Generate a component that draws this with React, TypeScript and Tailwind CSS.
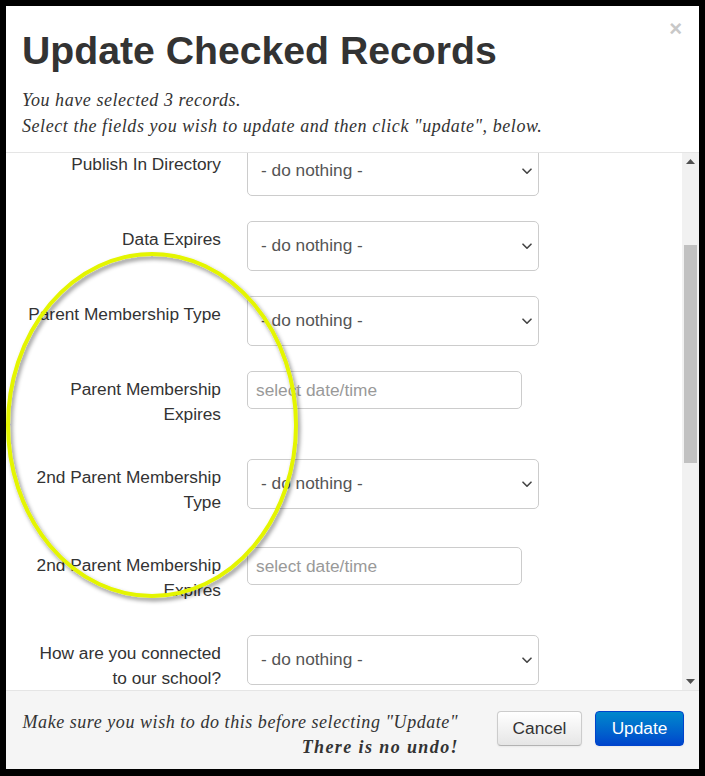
type Field = { label: string; kind: 'select' | 'date' }

const fields: Field[] = [
  { label: 'Publish In Directory', kind: 'select' },
  { label: 'Data Expires', kind: 'select' },
  { label: 'Parent Membership Type', kind: 'select' },
  { label: 'Parent Membership Expires', kind: 'date' },
  { label: '2nd Parent Membership Type', kind: 'select' },
  { label: '2nd Parent Membership Expires', kind: 'date' },
  { label: 'How are you connected to our school?', kind: 'select' },
]

function Chevron() {
  return (
    <svg width="10" height="7" viewBox="0 0 10 7" fill="none">
      <path d="M1 1.2 L5 5.2 L9 1.2" stroke="#444" strokeWidth="1.6" strokeLinecap="round" strokeLinejoin="round" />
    </svg>
  )
}

function FieldRow({ field }: { field: Field }) {
  return (
    <div className="flex items-start mb-[25px]">
      <label className="w-[198px] shrink-0 text-right pt-[6px] pb-[7px] leading-[25px] text-[17.3px] text-[#333]">
        {field.label}
      </label>
      <div className="ml-[26px]">
        {field.kind === 'select' ? (
          <div className="flex items-center justify-between w-[292px] h-[50px] pl-[13px] pr-[6px] border border-[#ccc] rounded-[5px] bg-white text-[17.3px] text-[#555]">
            <span>- do nothing -</span>
            <Chevron />
          </div>
        ) : (
          <input
            readOnly
            placeholder="select date/time"
            className="w-[275px] h-[38px] px-[8px] border border-[#ccc] rounded-[5px] bg-white text-[17.3px] text-[#555] placeholder:text-[#999] outline-none"
          />
        )}
      </div>
    </div>
  )
}

function Scrollbar() {
  return (
    <div className="w-[17px] shrink-0 flex flex-col bg-[#f1f1f1]">
      <div className="h-[17px] flex items-center justify-center">
        <svg width="9" height="5" viewBox="0 0 9 5">
          <path d="M0 5 L4.5 0 L9 5 Z" fill="#505050" />
        </svg>
      </div>
      <div className="flex-1 px-[2px]">
        <div className="mt-[75px] h-[218px] bg-[#c1c1c1]" />
      </div>
      <div className="h-[17px] flex items-center justify-center">
        <svg width="9" height="5" viewBox="0 0 9 5">
          <path d="M0 0 L4.5 5 L9 0 Z" fill="#505050" />
        </svg>
      </div>
    </div>
  )
}

export default function App() {
  const sans = "font-['Liberation_Sans',Arial,sans-serif]"
  const serif = "font-['Liberation_Serif','Times_New_Roman',serif]"

  return (
    <div className={`relative w-[705px] h-[776px] bg-black pt-[6px] px-[6px] pb-[7px] ${sans}`}>
      <div className="flex flex-col h-full bg-white">
        {/* header */}
        <div className="shrink-0 border-b border-[#e5e5e5] pt-[23px] pb-[13px] pl-[16px] pr-[16px]">
          <div className="flex items-start justify-between">
            <h1 className="text-[39.2px] leading-[43px] font-bold text-[#333]">Update Checked Records</h1>
            <button className="-mt-[11px] mr-[1px] text-[22px] font-bold leading-none text-[#c8c8c8]">×</button>
          </div>
          <div className={`mt-[15px] italic text-[18px] leading-[26px] text-[#333] tracking-[0.56px] ${serif}`}>
            <p>You have selected 3 records.</p>
            <p>Select the fields you wish to update and then click "update", below.</p>
          </div>
        </div>

        {/* body */}
        <div className="flex flex-1 min-h-0">
          <div className="flex-1 overflow-hidden pl-[17px]">
            <div className="-mt-[7px]">
              {fields.map((f) => (
                <FieldRow key={f.label} field={f} />
              ))}
            </div>
          </div>
          <Scrollbar />
        </div>

        {/* footer */}
        <div className="shrink-0 h-[79px] flex items-start border-t border-[#e5e5e5] bg-[#f5f5f5] pt-[19px] pl-[12px] pr-[15px]">
          <div className={`flex-1 mr-[39px] text-right italic whitespace-nowrap text-[18px] leading-[25px] text-[#333] tracking-[0.55px] ${serif}`}>
            <p>Make sure you wish to do this before selecting "Update"</p>
            <p className="font-bold tracking-[1.4px] -mr-[1px]">There is no undo!</p>
          </div>
          <button className="mt-[1px] w-[85px] h-[35px] rounded-[4px] border border-[#ccc] border-b-[#b3b3b3] bg-gradient-to-b from-white to-[#e6e6e6] text-[17.3px] text-[#333] shadow-[0_1px_2px_rgba(0,0,0,0.05)]">
            Cancel
          </button>
          <button className="mt-[1px] ml-[13px] w-[89px] h-[35px] rounded-[4px] border border-[#0044cc] bg-gradient-to-b from-[#0088cc] to-[#0044cc] text-[17.3px] text-white shadow-[0_1px_2px_rgba(0,0,0,0.05)]">
            Update
          </button>
        </div>
      </div>

      {/* highlighter annotation */}
      <svg className="absolute inset-0 pointer-events-none" width="705" height="776" viewBox="0 0 705 776">
        <defs>
          <filter id="hl-shadow" x="-20%" y="-20%" width="140%" height="140%">
            <feDropShadow dx="2" dy="3" stdDeviation="2" floodColor="#000" floodOpacity="0.45" />
          </filter>
        </defs>
        <ellipse cx="152" cy="425" rx="144" ry="171" fill="none" stroke="#e4f500" strokeWidth="4" filter="url(#hl-shadow)" />
      </svg>
    </div>
  )
}
